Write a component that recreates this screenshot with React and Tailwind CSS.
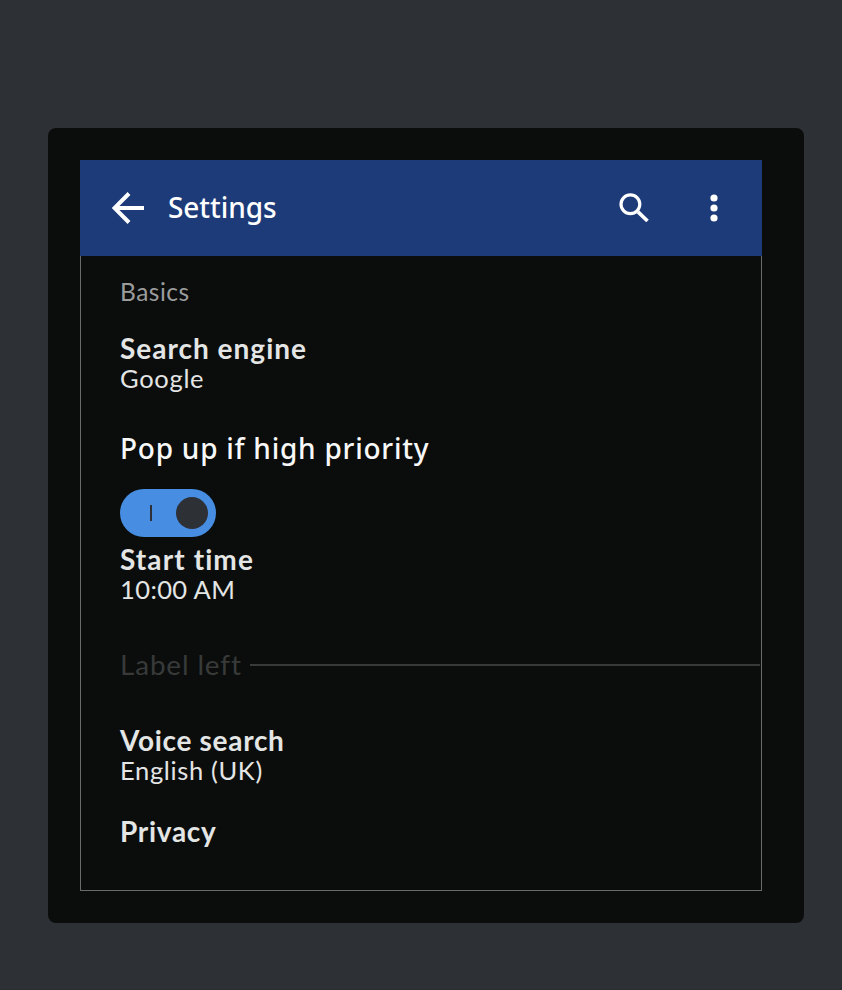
function Setting({ title, value, titleClass = "", valueClass = "" }) {
  return (
    <div className="font-['Lato',sans-serif] text-[#e4e5e5]">
      <div className={`h-[31px] text-[28px] leading-8 font-bold whitespace-nowrap ${titleClass}`}>{title}</div>
      {value && (
        <div className={`h-[31px] text-[25.5px] leading-[30px] whitespace-nowrap ${valueClass}`}>{value}</div>
      )}
    </div>
  );
}

function Header() {
  return (
    <header className="flex h-24 items-center bg-[#1d3b79] px-8 text-white">
      <svg width="32" height="32" viewBox="0 0 32 32" fill="none" stroke="currentColor" strokeWidth="4">
        <path d="M17 1.500 2.500 16 17 30.500M2 16H32" />
      </svg>
      <h1 className="mb-0.5 ml-6 h-10 text-[28px] leading-10 font-medium tracking-[-0.05px] font-['Noto_Sans',sans-serif]">Settings</h1>
      <svg className="mr-[61px] ml-auto" width="30" height="30" viewBox="0 0 30 30" fill="none" stroke="currentColor">
        <circle cx="11.400" cy="11.300" r="9.400" strokeWidth="3.200" />
        <path d="m19 18.800 9.500 9.200" strokeWidth="3.700" />
      </svg>
      <svg className="mr-3" width="8" height="28" viewBox="0 0 8 28" fill="currentColor">
        <circle cx="4" cy="4" r="3.600" />
        <circle cx="4" cy="14" r="3.600" />
        <circle cx="4" cy="24" r="3.600" />
      </svg>
    </header>
  );
}

export default function App() {
  return (
    <main className="h-[990px] w-[842px] border-b border-[#292b2f] bg-[#2d3034] pt-32 pl-12">
      <div className="h-[795px] w-[756px] rounded-lg bg-[#0b0d0c] p-8">
        <section className="h-[731px] w-[682px]">
          <Header />
          <div className="h-[635px] border border-t-0 border-[#6a6a6d] pt-5 pl-[39px]">
            <div className="h-8 text-[24.5px] leading-8 text-[#9b9c9c] tracking-[0.5px] font-['Lato',sans-serif]">Basics</div>
            <div className="pt-6">
              <Setting title="Search engine" value="Google" titleClass="tracking-[1px]" valueClass="tracking-[0.7px]" />
            </div>
            <div className="mt-[34px] h-10 text-[28px] leading-10 font-medium tracking-[0.75px] text-[#f8f8f8] font-['Noto_Sans',sans-serif]">Pop up if high priority</div>
            <button role="switch" aria-checked="true" aria-label="Pop up if high priority" className="mt-[21px] flex h-12 w-24 items-center justify-end rounded-full bg-[#478ee3] pr-2">
              <span className="mr-6 h-4 w-0.5 bg-[#2d3035]" />
              <span className="size-8 rounded-full bg-[#2d3035]" />
            </button>
            <div className="pt-[6px]">
              <Setting title="Start time" value="10:00 AM" titleClass="tracking-[1.1px]" valueClass="tracking-[0.4px]" />
            </div>
            <div className="mt-11 flex h-8 items-center pr-px">
              <span className="w-[129px] text-[27.8px] leading-8 whitespace-nowrap tracking-[0.9px] text-[#383a3a] font-['Lato',sans-serif]">Label left</span>
              <span className="-mt-px ml-px h-0.5 grow bg-[#383a3a]" />
            </div>
            <div className="pt-[43px]">
              <Setting title="Voice search" value="English (UK)" titleClass="tracking-[0.7px]" valueClass="tracking-[0.65px]" />
            </div>
            <div className="pt-[29px]">
              <Setting title="Privacy" titleClass="tracking-[0.7px]" />
            </div>
          </div>
        </section>
      </div>
    </main>
  );
}
